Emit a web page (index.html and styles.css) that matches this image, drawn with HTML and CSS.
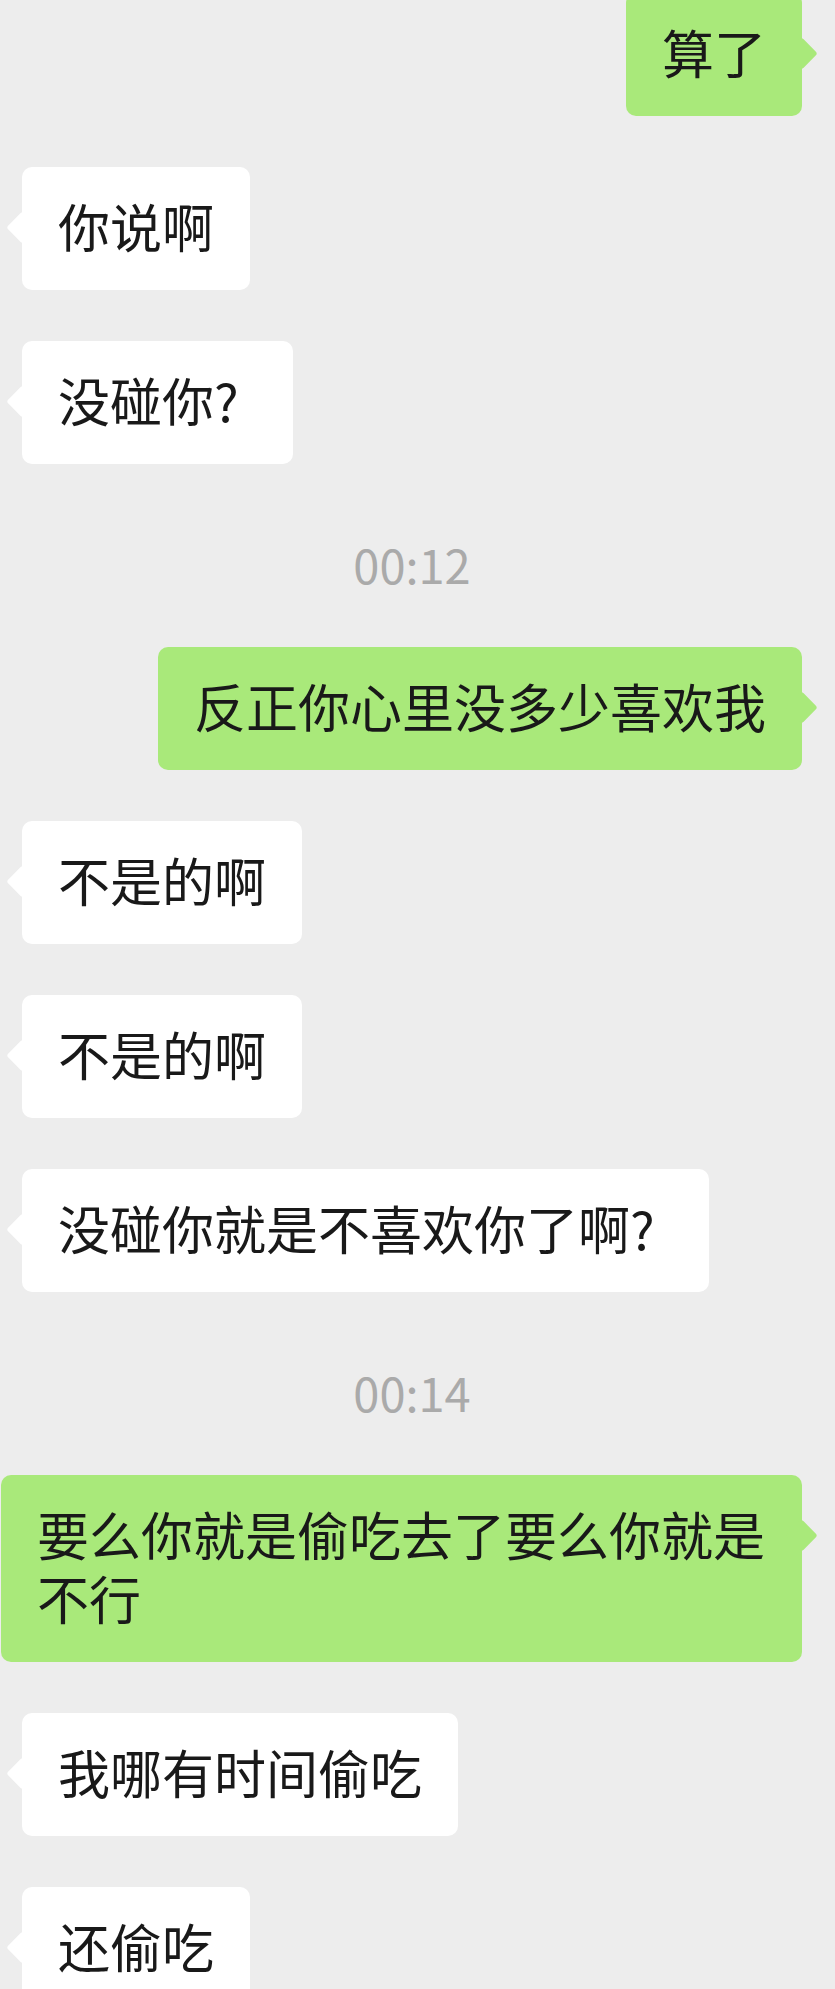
FILE: index.html
```html
<!DOCTYPE html>
<html lang="zh-CN">
<head>
    <meta charset="UTF-8">
    <meta name="viewport" content="width=device-width, initial-scale=1.0">
    <title>聊天记录</title>
    <link rel="stylesheet" href="styles.css">
</head>
<body>

    <div class="chat">
        <div class="row me"><div class="bubble">算了</div></div>
        <div class="row"><div class="bubble">你说啊</div></div>
        <div class="row"><div class="bubble">没碰你<span class="q">?</span></div></div>

        <div class="time">00:12</div>

        <div class="row me"><div class="bubble">反正你心里没多少喜欢我</div></div>
        <div class="row"><div class="bubble">不是的啊</div></div>
        <div class="row"><div class="bubble">不是的啊</div></div>
        <div class="row"><div class="bubble">没碰你就是不喜欢你了啊<span class="q">?</span></div></div>

        <div class="time">00:14</div>

        <div class="row me"><div class="bubble">要么你就是偷吃去了要么你就是不行</div></div>
        <div class="row"><div class="bubble">我哪有时间偷吃</div></div>
        <div class="row"><div class="bubble">还偷吃</div></div>
    </div>

</body>
</html>
```

FILE: styles.css
```css
* {
    margin: 0;
    padding: 0;
    box-sizing: border-box;
}

body {
    font-family: "Noto Sans CJK SC", "PingFang SC", sans-serif;
    background-color: #ededed;
    color: #191919;
    overflow: hidden;
}

.chat {
    width: 824px;
    margin-top: -7px;
    padding: 0 22px;
    display: flex;
    flex-direction: column;
    gap: 51px;
}

.row {
    display: flex;
}

/* my messages may run almost to the left edge */
.row.me {
    justify-content: flex-end;
    margin-left: -21px;
}

/* message bubble */
.bubble {
    position: relative;
    max-width: 780px;
    padding: 27px 36px 32px;
    font-size: 52px;
    line-height: 64px;
    background-color: #fff;
    border-radius: 10px;
}

.row.me .bubble {
    max-width: 801px;
    background-color: #a9e97a;
}

/* little arrow on the side */
.bubble::before {
    content: "";
    position: absolute;
    top: 49px;
    left: -11px;
    width: 23px;
    height: 23px;
    background-color: inherit;
    border-radius: 3px;
    transform: rotate(45deg);
}

.row.me .bubble::before {
    left: auto;
    right: -11px;
}

.q {
    padding-right: 18px;
}

.time {
    padding-top: 16px;
    height: 81px;
    line-height: 65px;
    font-size: 47px;
    text-align: center;
    color: #aaaaaa;
}
```
